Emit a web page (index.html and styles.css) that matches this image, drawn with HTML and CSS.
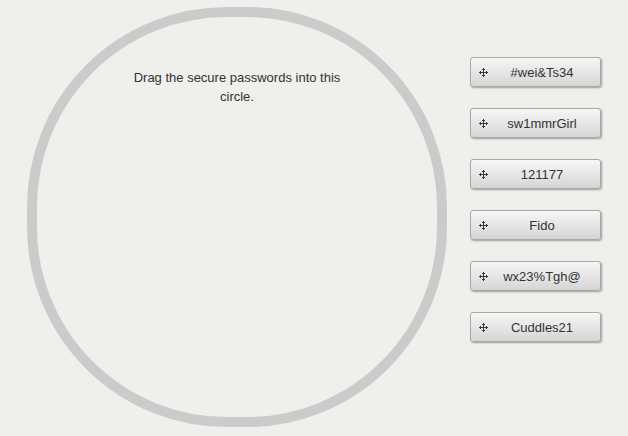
FILE: index.html
```html
<!DOCTYPE html>
<html>
<head>
<meta charset="utf-8">
<link rel="stylesheet" href="styles.css">
</head>
<body>
<div class="stage">
  <div class="drop-circle">
    <p class="instructions">Drag the secure passwords into this circle.</p>
  </div>
  <div class="password-list">
    <div class="pw-btn"><svg class="move-icon" viewBox="0 0 9 9"><path d="M4 0h1v1h1v1h-1v2h2v-1h1v1h1v1h-1v1h-1v-1h-2v2h1v1h-1v1h-1v-1h-1v-1h1v-2h-2v1h-1v-1h-1v-1h1v-1h1v1h2v-2h-1v-1h1z"/></svg><span class="pw-text">#wei&amp;Ts34</span></div>
    <div class="pw-btn"><svg class="move-icon" viewBox="0 0 9 9"><path d="M4 0h1v1h1v1h-1v2h2v-1h1v1h1v1h-1v1h-1v-1h-2v2h1v1h-1v1h-1v-1h-1v-1h1v-2h-2v1h-1v-1h-1v-1h1v-1h1v1h2v-2h-1v-1h1z"/></svg><span class="pw-text">sw1mmrGirl</span></div>
    <div class="pw-btn"><svg class="move-icon" viewBox="0 0 9 9"><path d="M4 0h1v1h1v1h-1v2h2v-1h1v1h1v1h-1v1h-1v-1h-2v2h1v1h-1v1h-1v-1h-1v-1h1v-2h-2v1h-1v-1h-1v-1h1v-1h1v1h2v-2h-1v-1h1z"/></svg><span class="pw-text">121177</span></div>
    <div class="pw-btn"><svg class="move-icon" viewBox="0 0 9 9"><path d="M4 0h1v1h1v1h-1v2h2v-1h1v1h1v1h-1v1h-1v-1h-2v2h1v1h-1v1h-1v-1h-1v-1h1v-2h-2v1h-1v-1h-1v-1h1v-1h1v1h2v-2h-1v-1h1z"/></svg><span class="pw-text">Fido</span></div>
    <div class="pw-btn"><svg class="move-icon" viewBox="0 0 9 9"><path d="M4 0h1v1h1v1h-1v2h2v-1h1v1h1v1h-1v1h-1v-1h-2v2h1v1h-1v1h-1v-1h-1v-1h1v-2h-2v1h-1v-1h-1v-1h1v-1h1v1h2v-2h-1v-1h1z"/></svg><span class="pw-text">wx23%Tgh@</span></div>
    <div class="pw-btn"><svg class="move-icon" viewBox="0 0 9 9"><path d="M4 0h1v1h1v1h-1v2h2v-1h1v1h1v1h-1v1h-1v-1h-2v2h1v1h-1v1h-1v-1h-1v-1h1v-2h-2v1h-1v-1h-1v-1h1v-1h1v1h2v-2h-1v-1h1z"/></svg><span class="pw-text">Cuddles21</span></div>
  </div>
</div>
</body>
</html>
```
FILE: styles.css
```css
html, body {
  margin: 0;
  padding: 0;
  background: #efefeb;
  font-family: "Liberation Sans", Arial, sans-serif;
  color: #333;
}

.stage {
  display: flex;
  align-items: flex-start;
  padding: 7px 0 0 27px;
}

.drop-circle {
  box-sizing: border-box;
  width: 420px;
  height: 420px;
  border: 10px solid #cbcbcb;
  border-radius: 200px;
  display: flex;
  justify-content: center;
  padding-top: 51px;
}

.instructions {
  margin: 0;
  width: 222px;
  font-size: 13px;
  line-height: 19px;
  text-align: center;
  color: #333;
}

.password-list {
  display: flex;
  flex-direction: column;
  gap: 21px;
  margin: 50px 0 0 23px;
}

.pw-btn {
  box-sizing: border-box;
  width: 131px;
  height: 30px;
  display: flex;
  align-items: center;
  padding: 0 4px 0 8px;
  border: 1px solid #a9a9a9;
  border-radius: 3px;
  background: linear-gradient(to bottom, #f6f6f6 0%, #e6e6e6 50%, #d5d5d5 100%);
  box-shadow: 1px 1px 2px rgba(0, 0, 0, 0.35);
  font-size: 13px;
  color: #333;
}

.move-icon {
  width: 9px;
  height: 9px;
  fill: #3a3a3a;
  flex: none;
  shape-rendering: crispEdges;
}

.pw-text {
  flex: 1;
  text-align: center;
}
```
